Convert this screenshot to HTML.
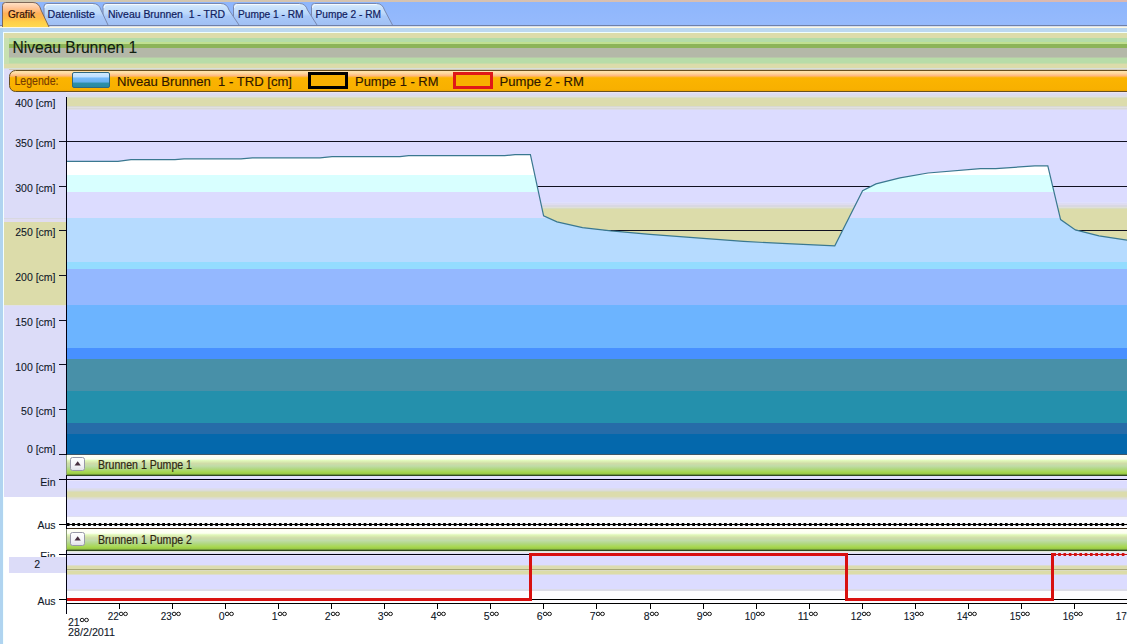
<!DOCTYPE html><html><head><meta charset="utf-8"><style>html,body{margin:0;padding:0;width:1127px;height:644px;overflow:hidden;background:#fff}svg{display:block}text{font-family:"Liberation Sans",sans-serif;white-space:pre}</style></head><body>
<svg width="1127" height="644" viewBox="0 0 1127 644" shape-rendering="crispEdges" xml:space="preserve">
<defs>
<linearGradient id="gAct" x1="0" y1="0" x2="0" y2="1">
<stop offset="0" stop-color="#ffe4c8"/><stop offset="0.2" stop-color="#ffc8a0"/><stop offset="0.45" stop-color="#ffb058"/><stop offset="0.65" stop-color="#ffbc48"/><stop offset="0.8" stop-color="#ffd048"/><stop offset="1" stop-color="#ffd850"/></linearGradient>
<linearGradient id="gTab" x1="0" y1="0" x2="0" y2="1">
<stop offset="0" stop-color="#e0f0fc"/><stop offset="0.15" stop-color="#cce4fc"/><stop offset="0.45" stop-color="#bcd8fa"/><stop offset="0.6" stop-color="#a8c8f8"/><stop offset="1" stop-color="#a0c0f4"/></linearGradient>
<linearGradient id="gLeg" x1="0" y1="0" x2="0" y2="1">
<stop offset="0" stop-color="#ffe4b0"/><stop offset="0.12" stop-color="#ffdca0"/><stop offset="0.25" stop-color="#ffb880"/><stop offset="0.35" stop-color="#fbb400"/><stop offset="0.9" stop-color="#f8b000"/><stop offset="1" stop-color="#e8a000"/></linearGradient>
<linearGradient id="gBlue" x1="0" y1="0" x2="0" y2="1">
<stop offset="0" stop-color="#d0ecff"/><stop offset="0.3" stop-color="#c0e0ff"/><stop offset="0.36" stop-color="#78bcf8"/><stop offset="0.64" stop-color="#68b0f0"/><stop offset="0.7" stop-color="#3090a8"/><stop offset="1" stop-color="#2888a0"/></linearGradient>
<linearGradient id="gHdr" x1="0" y1="0" x2="0" y2="1">
<stop offset="0" stop-color="#fffff8"/><stop offset="0.2" stop-color="#fcfff0"/><stop offset="0.28" stop-color="#e0f8b8"/><stop offset="0.42" stop-color="#d0dca8"/><stop offset="0.55" stop-color="#c0dca8"/><stop offset="0.7" stop-color="#b0d880"/><stop offset="0.85" stop-color="#a8d850"/><stop offset="1" stop-color="#90c040"/></linearGradient>
<linearGradient id="gBtn" x1="0" y1="0" x2="0" y2="1">
<stop offset="0" stop-color="#ffffff"/><stop offset="0.6" stop-color="#f4f4f8"/><stop offset="1" stop-color="#e0e0e8"/></linearGradient>
<pattern id="pDot" x="66" y="0" width="5.3" height="10" patternUnits="userSpaceOnUse"><rect x="0.6" y="0" width="3" height="10" fill="#000"/></pattern>
<pattern id="pDotR" x="1052" y="0" width="5.3" height="10" patternUnits="userSpaceOnUse"><rect x="0.6" y="0" width="3" height="10" fill="#d01010"/></pattern>
</defs>
<linearGradient id="gTop" x1="0" y1="0" x2="1" y2="0"><stop offset="0" stop-color="#d0c8b0"/><stop offset="0.5" stop-color="#d8c0b0"/><stop offset="1" stop-color="#dcb8b0"/></linearGradient>
<linearGradient id="gBar" x1="0" y1="0" x2="0" y2="1"><stop offset="0" stop-color="#8eb6fc"/><stop offset="1" stop-color="#96bafc"/></linearGradient>
<rect x="0" y="0" width="1127" height="2" fill="url(#gTop)" />
<rect x="0" y="2" width="1127" height="23" fill="url(#gBar)" />
<rect x="0" y="25" width="1127" height="1" fill="#7080a8" />
<rect x="0" y="26" width="1127" height="1" fill="#d8e0ec" />
<rect x="0" y="27" width="1127" height="1" fill="#fff8e0" />
<rect x="0" y="28" width="1127" height="4" fill="#bcd8f0" />
<rect x="0" y="32" width="1127" height="1" fill="#f0fffc" />
<rect x="0" y="28" width="3" height="616" fill="#b0d4f0" />
<rect x="3" y="32" width="1" height="612" fill="#f4ffff" />
<path d="M311.5,25 L311.5,6.5 Q311.5,3.5 314.5,3.5 L376.5,3.5 Q382.5,3.5 384.5,10 L392.5,25 Z" fill="url(#gTab)" shape-rendering="geometricPrecision"/>
<path d="M311.5,25 L311.5,6.5 Q311.5,3.5 314.5,3.5 L376.5,3.5 Q382.5,3.5 384.5,10 L392.5,25" fill="none" stroke="#7888b0" stroke-width="1" shape-rendering="geometricPrecision"/>
<path d="M312.5,8 Q312.5,4.5 315.5,4.5 L376.5,4.5" fill="none" stroke="#f4faff" stroke-width="1" shape-rendering="geometricPrecision"/>
<path d="M233.5,25 L233.5,6.5 Q233.5,3.5 236.5,3.5 L299.5,3.5 Q305.5,3.5 307.5,10 L317,25 Z" fill="url(#gTab)" shape-rendering="geometricPrecision"/>
<path d="M233.5,25 L233.5,6.5 Q233.5,3.5 236.5,3.5 L299.5,3.5 Q305.5,3.5 307.5,10 L317,25" fill="none" stroke="#7888b0" stroke-width="1" shape-rendering="geometricPrecision"/>
<path d="M234.5,8 Q234.5,4.5 237.5,4.5 L299.5,4.5" fill="none" stroke="#f4faff" stroke-width="1" shape-rendering="geometricPrecision"/>
<path d="M103,25 L103,6.5 Q103,3.5 106,3.5 L221,3.5 Q227,3.5 229,10 L239,25 Z" fill="url(#gTab)" shape-rendering="geometricPrecision"/>
<path d="M103,25 L103,6.5 Q103,3.5 106,3.5 L221,3.5 Q227,3.5 229,10 L239,25" fill="none" stroke="#7888b0" stroke-width="1" shape-rendering="geometricPrecision"/>
<path d="M104,8 Q104,4.5 107,4.5 L221,4.5" fill="none" stroke="#f4faff" stroke-width="1" shape-rendering="geometricPrecision"/>
<path d="M44,25 L44,6.5 Q44,3.5 47,3.5 L93,3.5 Q99,3.5 101,10 L108,25 Z" fill="url(#gTab)" shape-rendering="geometricPrecision"/>
<path d="M44,25 L44,6.5 Q44,3.5 47,3.5 L93,3.5 Q99,3.5 101,10 L108,25" fill="none" stroke="#7888b0" stroke-width="1" shape-rendering="geometricPrecision"/>
<path d="M45,8 Q45,4.5 48,4.5 L93,4.5" fill="none" stroke="#f4faff" stroke-width="1" shape-rendering="geometricPrecision"/>
<path d="M2.5,27 L2.5,5.5 Q2.5,2.5 5.5,2.5 L33,2.5 Q39,2.5 41,10 L48.5,26 L49.0,27 Z" fill="url(#gAct)" shape-rendering="geometricPrecision"/>
<path d="M2.5,27 L2.5,5.5 Q2.5,2.5 5.5,2.5 L33,2.5 Q39,2.5 41,10 L48.5,26 L49.0,27" fill="none" stroke="#806858" stroke-width="1" shape-rendering="geometricPrecision"/>
<g shape-rendering="geometricPrecision">
<text x="8" y="18" font-size="10.5" fill="#301008" stroke="#301008" stroke-width="0.2" textLength="27" lengthAdjust="spacingAndGlyphs" >Grafik</text>
<text x="47.5" y="18" font-size="10.5" fill="#102060" stroke="#102060" stroke-width="0.2" textLength="47.5" lengthAdjust="spacingAndGlyphs" >Datenliste</text>
<text x="108" y="18" font-size="10.5" fill="#102060" stroke="#102060" stroke-width="0.2" textLength="117" lengthAdjust="spacingAndGlyphs" >Niveau Brunnen  1 - TRD</text>
<text x="238" y="18" font-size="10.5" fill="#102060" stroke="#102060" stroke-width="0.2" textLength="65.5" lengthAdjust="spacingAndGlyphs" >Pumpe 1 - RM</text>
<text x="315.5" y="18" font-size="10.5" fill="#102060" stroke="#102060" stroke-width="0.2" textLength="65.5" lengthAdjust="spacingAndGlyphs" >Pumpe 2 - RM</text>
</g>
<rect x="4" y="33" width="1123" height="611" fill="#ffffff" />
<rect x="4" y="33" width="1123" height="35" fill="#dcdcaa" />
<rect x="4" y="38" width="1123" height="4" fill="#b4dca8" />
<rect x="4" y="42" width="1123" height="2" fill="#c0e090" />
<rect x="9" y="44" width="1118" height="4" fill="#8cb458" />
<rect x="9" y="48" width="1118" height="9" fill="#b4b8a8" />
<rect x="9" y="57" width="1118" height="1" fill="#b8c8a8" />
<rect x="4" y="58" width="1123" height="5" fill="#b8dca8" />
<rect x="4" y="63" width="1123" height="1" fill="#c8dca8" />
<rect x="4" y="64" width="1123" height="4" fill="#dcdcaa" />
<rect x="4" y="38" width="5" height="26" fill="#c8e0b0" />
<rect x="4" y="68" width="1123" height="1" fill="#d8e0d8" />
<rect x="4" y="69" width="1123" height="428" fill="#dcdcf8" />
<rect x="9" y="69" width="1118" height="1" fill="#d0c8b8" />
<g shape-rendering="geometricPrecision">
<text x="12.5" y="52.8" font-size="16" fill="#102010" stroke="#102010" stroke-width="0.1" textLength="124.8" lengthAdjust="spacingAndGlyphs" >Niveau Brunnen 1</text>
</g>
<rect x="9.5" y="70.5" width="1130" height="21" rx="6" ry="6" fill="url(#gLeg)" stroke="#685020" stroke-width="1" shape-rendering="geometricPrecision"/>
<rect x="72.5" y="72.5" width="37" height="15" rx="1.5" fill="url(#gBlue)" stroke="#306880" stroke-width="1" shape-rendering="geometricPrecision"/>
<rect x="309.5" y="73.5" width="37" height="14" fill="#f8b000" stroke="#000" stroke-width="3"/>
<rect x="454.5" y="73.5" width="37" height="14" fill="#f8b000" stroke="#e01818" stroke-width="3"/>
<g shape-rendering="geometricPrecision">
<text x="14.5" y="85" font-size="12" fill="#783c00" stroke="#783c00" stroke-width="0.15" textLength="44" lengthAdjust="spacingAndGlyphs" >Legende:</text>
<text x="117" y="85.5" font-size="13" fill="#301800" stroke="#301800" stroke-width="0.15" textLength="175" lengthAdjust="spacingAndGlyphs" >Niveau Brunnen  1 - TRD [cm]</text>
<text x="355" y="85.5" font-size="13" fill="#301800" stroke="#301800" stroke-width="0.15" textLength="83.5" lengthAdjust="spacingAndGlyphs" >Pumpe 1 - RM</text>
<text x="499.5" y="85.5" font-size="13" fill="#301800" stroke="#301800" stroke-width="0.15" textLength="84.5" lengthAdjust="spacingAndGlyphs" >Pumpe 2 - RM</text>
</g>
<rect x="4" y="92" width="62" height="405" fill="#dcdcf8" />
<rect x="4" y="218" width="62" height="1" fill="#d8d8e0" />
<rect x="4" y="219" width="62" height="3" fill="#e0dcf0" />
<rect x="4" y="222" width="62" height="83" fill="#dcdcaa" />
<rect x="4" y="305" width="62" height="1" fill="#e0e0e8" />
<rect x="66" y="92" width="1061" height="362" fill="#dcdcff" />
<rect x="66" y="92" width="1061" height="1" fill="#f0e4ec" />
<rect x="66" y="93" width="1061" height="1" fill="#dcdcf4" />
<rect x="66" y="94" width="1061" height="1" fill="#dcdcf0" />
<rect x="66" y="95" width="1061" height="1" fill="#dcdce8" />
<rect x="66" y="96" width="1061" height="1" fill="#e0e0e0" />
<rect x="66" y="97" width="1061" height="1" fill="#d8dcc8" />
<rect x="66" y="106" width="1061" height="1" fill="#d8d8d0" />
<rect x="66" y="107" width="1061" height="1" fill="#e0e0e0" />
<rect x="66" y="108" width="1061" height="1" fill="#d8d8d8" />
<rect x="66" y="109" width="1061" height="1" fill="#dcdce8" />
<rect x="66" y="202" width="1061" height="1" fill="#e0e0fc" />
<rect x="66" y="203" width="1061" height="1" fill="#dcdcf4" />
<rect x="66" y="204" width="1061" height="1" fill="#e0dcf0" />
<rect x="66" y="205" width="1061" height="1" fill="#d8d8e4" />
<rect x="66" y="206" width="1061" height="1" fill="#d8d8e0" />
<rect x="66" y="207" width="1061" height="1" fill="#e0e0d8" />
<rect x="66" y="208" width="1061" height="1" fill="#d8dcc0" />
<rect x="66" y="98" width="1061" height="8" fill="#dcdcac" />
<rect x="66" y="209" width="1061" height="53" fill="#dcdcaa" />
<rect x="66" y="141" width="1061" height="1" fill="#101020" />
<rect x="66" y="186" width="1061" height="1" fill="#101020" />
<rect x="66" y="230" width="1061" height="1" fill="#101020" />
<rect x="66" y="275" width="1061" height="1" fill="#101020" />
<rect x="66" y="320" width="1061" height="1" fill="#101020" />
<rect x="66" y="364" width="1061" height="1" fill="#101020" />
<rect x="66" y="409" width="1061" height="1" fill="#101020" />
<rect x="66" y="454" width="1061" height="1" fill="#101020" />
<clipPath id="cArea"><path d="M66,454 L66,161.4 L118,161.4 L131,159.70000000000002 L175,159.70000000000002 L184,158.8 L241,158.8 L252.4,157.8 L320,157.8 L332,156.6 L400,156.6 L408.6,155.70000000000002 L504.7,155.70000000000002 L515,154.70000000000002 L530.4,154.70000000000002 L543.6,215.8 L557,221.9 L582.5,227.6 L611,230.9 L650,234.4 L700,238.20000000000002 L743.5,241.4 L787,243.70000000000002 L834.8,245.8 L862.6,190.8 L876,183.9 L900,177.8 L928,173.0 L980.4,168.70000000000002 L995.7,168.70000000000002 L1034.8,165.8 L1047.8,165.8 L1060.6,219.6 L1075.4,229.9 L1099,235.8 L1127,240.20000000000002 L1127,454 Z"/></clipPath>
<g clip-path="url(#cArea)">
<rect x="66" y="97" width="1061" height="78" fill="#ffffff" />
<rect x="66" y="175" width="1061" height="17" fill="#d8ffff" />
<rect x="66" y="192" width="1061" height="26" fill="#dcdcff" />
<rect x="66" y="218" width="1061" height="44" fill="#b6dbff" />
<rect x="66" y="262" width="1061" height="7" fill="#94dcff" />
<rect x="66" y="269" width="1061" height="36" fill="#94b8ff" />
<rect x="66" y="305" width="1061" height="43" fill="#6cb4ff" />
<rect x="66" y="348" width="1061" height="11" fill="#4890ff" />
<rect x="66" y="359" width="1061" height="32" fill="#4890a8" />
<rect x="66" y="391" width="1061" height="32" fill="#2490ac" />
<rect x="66" y="423" width="1061" height="11" fill="#266ca8" />
<rect x="66" y="434" width="1061" height="20" fill="#0468ac" />
</g>
<polyline points="66,161.4 118,161.4 131,159.70000000000002 175,159.70000000000002 184,158.8 241,158.8 252.4,157.8 320,157.8 332,156.6 400,156.6 408.6,155.70000000000002 504.7,155.70000000000002 515,154.70000000000002 530.4,154.70000000000002 543.6,215.8 557,221.9 582.5,227.6 611,230.9 650,234.4 700,238.20000000000002 743.5,241.4 787,243.70000000000002 834.8,245.8 862.6,190.8 876,183.9 900,177.8 928,173.0 980.4,168.70000000000002 995.7,168.70000000000002 1034.8,165.8 1047.8,165.8 1060.6,219.6 1075.4,229.9 1099,235.8 1127,240.20000000000002" fill="none" stroke="#3a7890" stroke-width="1.2" shape-rendering="geometricPrecision"/>
<rect x="66" y="454" width="1061" height="1" fill="#405868" />
<rect x="59" y="141" width="7" height="1" fill="#101020" />
<rect x="59" y="186" width="7" height="1" fill="#101020" />
<rect x="59" y="230" width="7" height="1" fill="#101020" />
<rect x="59" y="275" width="7" height="1" fill="#101020" />
<rect x="59" y="320" width="7" height="1" fill="#101020" />
<rect x="59" y="364" width="7" height="1" fill="#101020" />
<rect x="59" y="409" width="7" height="1" fill="#101020" />
<rect x="59" y="454" width="7" height="1" fill="#101020" />
<g shape-rendering="geometricPrecision">
<text x="55.5" y="106.5" font-size="10.5" fill="#101828" stroke="#101828" stroke-width="0.1" text-anchor="end" >400 [cm]</text>
<text x="55.5" y="146.7" font-size="10.5" fill="#101828" stroke="#101828" stroke-width="0.1" text-anchor="end" >350 [cm]</text>
<text x="55.5" y="191.5" font-size="10.5" fill="#101828" stroke="#101828" stroke-width="0.1" text-anchor="end" >300 [cm]</text>
<text x="55.5" y="236" font-size="10.5" fill="#101828" stroke="#101828" stroke-width="0.1" text-anchor="end" >250 [cm]</text>
<text x="55.5" y="280.5" font-size="10.5" fill="#101828" stroke="#101828" stroke-width="0.1" text-anchor="end" >200 [cm]</text>
<text x="55.5" y="326" font-size="10.5" fill="#101828" stroke="#101828" stroke-width="0.1" text-anchor="end" >150 [cm]</text>
<text x="55.5" y="370.5" font-size="10.5" fill="#101828" stroke="#101828" stroke-width="0.1" text-anchor="end" >100 [cm]</text>
<text x="55.5" y="415" font-size="10.5" fill="#101828" stroke="#101828" stroke-width="0.1" text-anchor="end" >50 [cm]</text>
<text x="55.5" y="452.6" font-size="10.5" fill="#101828" stroke="#101828" stroke-width="0.1" text-anchor="end" >0 [cm]</text>
</g>
<rect x="66" y="455" width="1061" height="20" fill="url(#gHdr)" />
<rect x="66" y="474" width="1061" height="1" fill="#709838" />
<rect x="66" y="475" width="1061" height="1" fill="#304820" />
<rect x="66" y="476" width="1061" height="41" fill="#dcdcff" />
<rect x="66" y="476" width="1061" height="2" fill="#e4e2fc" />
<rect x="66" y="488" width="1061" height="1" fill="#dcdcf0" />
<rect x="66" y="489" width="1061" height="1" fill="#dcdce8" />
<rect x="66" y="490" width="1061" height="1" fill="#dcdcd8" />
<rect x="66" y="491" width="1061" height="1" fill="#d8dcc0" />
<rect x="66" y="496" width="1061" height="1" fill="#dcdcb0" />
<rect x="66" y="497" width="1061" height="1" fill="#dcdcc8" />
<rect x="66" y="498" width="1061" height="1" fill="#dcdcd8" />
<rect x="66" y="499" width="1061" height="1" fill="#dcdce8" />
<rect x="66" y="492" width="1061" height="4" fill="#dcdcac" />
<rect x="66" y="480" width="1061" height="1" fill="#e8e4fc" />
<rect x="66" y="516" width="1061" height="1" fill="#e0e0f0" />
<rect x="4" y="497" width="62" height="106" fill="#ffffff" />
<rect x="66" y="517" width="1061" height="11" fill="#fcfcff" />
<rect x="59" y="479" width="1068" height="1" fill="#000010" />
<rect x="59" y="524" width="1068" height="1" fill="#000" />
<rect x="66" y="523" width="1061" height="3" fill="url(#pDot)" />
<rect x="66" y="528" width="1061" height="1" fill="#382818" />
<rect x="70.5" y="457.5" width="14" height="13" rx="2" ry="2" fill="url(#gBtn)" stroke="#9898a8" stroke-width="1" shape-rendering="geometricPrecision"/>
<path d="M74.5,465.5 L80.8,465.5 L77.7,461.2 Z" fill="#483040" shape-rendering="geometricPrecision"/>
<g shape-rendering="geometricPrecision">
<text x="98" y="469" font-size="12" fill="#302810" stroke="#302810" stroke-width="0.2" textLength="94" lengthAdjust="spacingAndGlyphs" >Brunnen 1 Pumpe 1</text>
<text x="55.5" y="486" font-size="10.5" fill="#101828" stroke="#101828" stroke-width="0.1" text-anchor="end" >Ein</text>
<text x="55.5" y="529" font-size="10.5" fill="#101828" stroke="#101828" stroke-width="0.1" text-anchor="end" >Aus</text>
</g>
<rect x="66" y="529" width="1061" height="21" fill="url(#gHdr)" />
<rect x="66" y="549" width="1061" height="1" fill="#709838" />
<rect x="66" y="550" width="1061" height="1" fill="#304820" />
<rect x="66" y="551" width="1061" height="40" fill="#dcdcff" />
<rect x="66" y="551" width="1061" height="1" fill="#e0e8d8" />
<rect x="66" y="552" width="1061" height="1" fill="#e8e8f0" />
<rect x="66" y="553" width="1061" height="1" fill="#e0e0f8" />
<rect x="66" y="555" width="1061" height="1" fill="#e8e8fc" />
<rect x="66" y="565" width="1061" height="1" fill="#dcdcd0" />
<rect x="66" y="566" width="1061" height="1" fill="#dcdcb0" />
<rect x="66" y="567" width="1061" height="1" fill="#dcdcb0" />
<rect x="66" y="568" width="1061" height="1" fill="#dcdcb0" />
<rect x="66" y="569" width="1061" height="1" fill="#a8a878" />
<rect x="66" y="570" width="1061" height="1" fill="#dcdcc0" />
<rect x="66" y="571" width="1061" height="1" fill="#dcdca8" />
<rect x="66" y="572" width="1061" height="1" fill="#dcdca8" />
<rect x="66" y="573" width="1061" height="1" fill="#dcdca8" />
<rect x="66" y="574" width="1061" height="1" fill="#dcdcd0" />
<rect x="66" y="589" width="1061" height="1" fill="#dcdce8" />
<rect x="66" y="590" width="1061" height="1" fill="#dcdce8" />
<rect x="66" y="591" width="1061" height="12" fill="#fcfcff" />
<rect x="59" y="554" width="1068" height="1" fill="#000010" />
<rect x="59" y="599" width="1068" height="1" fill="#000" />
<rect x="70.5" y="532.5" width="14" height="13" rx="2" ry="2" fill="url(#gBtn)" stroke="#9898a8" stroke-width="1" shape-rendering="geometricPrecision"/>
<path d="M74.5,540.5 L80.8,540.5 L77.7,536.2 Z" fill="#483040" shape-rendering="geometricPrecision"/>
<g shape-rendering="geometricPrecision">
<text x="98" y="544" font-size="12" fill="#302810" stroke="#302810" stroke-width="0.2" textLength="94" lengthAdjust="spacingAndGlyphs" >Brunnen 1 Pumpe 2</text>
<text x="55.5" y="560" font-size="10.5" fill="#101828" stroke="#101828" stroke-width="0.1" text-anchor="end" >Ein</text>
</g>
<rect x="9" y="557" width="57" height="16" fill="#dcdcf8" />
<g shape-rendering="geometricPrecision">
<text x="40" y="567.6" font-size="10.5" fill="#101828" stroke="#101828" stroke-width="0.1" text-anchor="end" >2</text>
<text x="55.5" y="604.5" font-size="10.5" fill="#101828" stroke="#101828" stroke-width="0.1" text-anchor="end" >Aus</text>
</g>
<path d="M66,599.5 L530.5,599.5 L530.5,554.5 L846.5,554.5 L846.5,599.5 L1052,599.5 L1052,554.5 L1056,554.5" fill="none" stroke="#d81010" stroke-width="3" stroke-linejoin="miter"/>
<rect x="1056" y="553" width="71" height="3" fill="url(#pDotR)" />
<rect x="1056" y="554" width="71" height="1" fill="#d01010" />
<rect x="66" y="97" width="1" height="358" fill="#000010" />
<rect x="66" y="455" width="1" height="20" fill="#8a9a78" />
<rect x="66" y="475" width="1" height="54" fill="#000010" />
<rect x="66" y="529" width="1" height="21" fill="#8a9a78" />
<rect x="66" y="550" width="1" height="64" fill="#000010" />
<rect x="66" y="603" width="1061" height="1" fill="#000" />
<g shape-rendering="geometricPrecision">
<text x="68" y="625.5" font-size="10.5" fill="#101828" stroke="#101828" stroke-width="0.1" >21</text>
<ellipse cx="82.1" cy="620" rx="1.9" ry="1.7" fill="none" stroke="#181818" stroke-width="1.0"/>
<ellipse cx="86.5" cy="620" rx="1.9" ry="1.7" fill="none" stroke="#181818" stroke-width="1.0"/>
<text x="68" y="636" font-size="10.5" fill="#101828" stroke="#101828" stroke-width="0.1" textLength="47" lengthAdjust="spacingAndGlyphs" >28/2/2011</text>
<rect x="119" y="604" width="1" height="5" fill="#000" />
<text x="118.7" y="619.5" font-size="10.5" fill="#101828" stroke="#101828" stroke-width="0.1" textLength="11" lengthAdjust="spacingAndGlyphs" text-anchor="end" >22</text>
<ellipse cx="121.1" cy="613.9" rx="1.9" ry="1.7" fill="none" stroke="#181818" stroke-width="1.0"/>
<ellipse cx="125.5" cy="613.9" rx="1.9" ry="1.7" fill="none" stroke="#181818" stroke-width="1.0"/>
<rect x="172" y="604" width="1" height="5" fill="#000" />
<text x="171.7" y="619.5" font-size="10.5" fill="#101828" stroke="#101828" stroke-width="0.1" textLength="11" lengthAdjust="spacingAndGlyphs" text-anchor="end" >23</text>
<ellipse cx="174.10000000000002" cy="613.9" rx="1.9" ry="1.7" fill="none" stroke="#181818" stroke-width="1.0"/>
<ellipse cx="178.5" cy="613.9" rx="1.9" ry="1.7" fill="none" stroke="#181818" stroke-width="1.0"/>
<rect x="225" y="604" width="1" height="5" fill="#000" />
<text x="224.7" y="619.5" font-size="10.5" fill="#101828" stroke="#101828" stroke-width="0.1" text-anchor="end" >0</text>
<ellipse cx="227.10000000000002" cy="613.9" rx="1.9" ry="1.7" fill="none" stroke="#181818" stroke-width="1.0"/>
<ellipse cx="231.5" cy="613.9" rx="1.9" ry="1.7" fill="none" stroke="#181818" stroke-width="1.0"/>
<rect x="278" y="604" width="1" height="5" fill="#000" />
<text x="277.7" y="619.5" font-size="10.5" fill="#101828" stroke="#101828" stroke-width="0.1" text-anchor="end" >1</text>
<ellipse cx="280.1" cy="613.9" rx="1.9" ry="1.7" fill="none" stroke="#181818" stroke-width="1.0"/>
<ellipse cx="284.5" cy="613.9" rx="1.9" ry="1.7" fill="none" stroke="#181818" stroke-width="1.0"/>
<rect x="331" y="604" width="1" height="5" fill="#000" />
<text x="330.7" y="619.5" font-size="10.5" fill="#101828" stroke="#101828" stroke-width="0.1" text-anchor="end" >2</text>
<ellipse cx="333.1" cy="613.9" rx="1.9" ry="1.7" fill="none" stroke="#181818" stroke-width="1.0"/>
<ellipse cx="337.5" cy="613.9" rx="1.9" ry="1.7" fill="none" stroke="#181818" stroke-width="1.0"/>
<rect x="384" y="604" width="1" height="5" fill="#000" />
<text x="383.7" y="619.5" font-size="10.5" fill="#101828" stroke="#101828" stroke-width="0.1" text-anchor="end" >3</text>
<ellipse cx="386.1" cy="613.9" rx="1.9" ry="1.7" fill="none" stroke="#181818" stroke-width="1.0"/>
<ellipse cx="390.5" cy="613.9" rx="1.9" ry="1.7" fill="none" stroke="#181818" stroke-width="1.0"/>
<rect x="437" y="604" width="1" height="5" fill="#000" />
<text x="436.7" y="619.5" font-size="10.5" fill="#101828" stroke="#101828" stroke-width="0.1" text-anchor="end" >4</text>
<ellipse cx="439.1" cy="613.9" rx="1.9" ry="1.7" fill="none" stroke="#181818" stroke-width="1.0"/>
<ellipse cx="443.5" cy="613.9" rx="1.9" ry="1.7" fill="none" stroke="#181818" stroke-width="1.0"/>
<rect x="490" y="604" width="1" height="5" fill="#000" />
<text x="489.7" y="619.5" font-size="10.5" fill="#101828" stroke="#101828" stroke-width="0.1" text-anchor="end" >5</text>
<ellipse cx="492.1" cy="613.9" rx="1.9" ry="1.7" fill="none" stroke="#181818" stroke-width="1.0"/>
<ellipse cx="496.5" cy="613.9" rx="1.9" ry="1.7" fill="none" stroke="#181818" stroke-width="1.0"/>
<rect x="543" y="604" width="1" height="5" fill="#000" />
<text x="542.7" y="619.5" font-size="10.5" fill="#101828" stroke="#101828" stroke-width="0.1" text-anchor="end" >6</text>
<ellipse cx="545.0999999999999" cy="613.9" rx="1.9" ry="1.7" fill="none" stroke="#181818" stroke-width="1.0"/>
<ellipse cx="549.5" cy="613.9" rx="1.9" ry="1.7" fill="none" stroke="#181818" stroke-width="1.0"/>
<rect x="596" y="604" width="1" height="5" fill="#000" />
<text x="595.7" y="619.5" font-size="10.5" fill="#101828" stroke="#101828" stroke-width="0.1" text-anchor="end" >7</text>
<ellipse cx="598.0999999999999" cy="613.9" rx="1.9" ry="1.7" fill="none" stroke="#181818" stroke-width="1.0"/>
<ellipse cx="602.5" cy="613.9" rx="1.9" ry="1.7" fill="none" stroke="#181818" stroke-width="1.0"/>
<rect x="650" y="604" width="1" height="5" fill="#000" />
<text x="649.7" y="619.5" font-size="10.5" fill="#101828" stroke="#101828" stroke-width="0.1" text-anchor="end" >8</text>
<ellipse cx="652.0999999999999" cy="613.9" rx="1.9" ry="1.7" fill="none" stroke="#181818" stroke-width="1.0"/>
<ellipse cx="656.5" cy="613.9" rx="1.9" ry="1.7" fill="none" stroke="#181818" stroke-width="1.0"/>
<rect x="703" y="604" width="1" height="5" fill="#000" />
<text x="702.7" y="619.5" font-size="10.5" fill="#101828" stroke="#101828" stroke-width="0.1" text-anchor="end" >9</text>
<ellipse cx="705.0999999999999" cy="613.9" rx="1.9" ry="1.7" fill="none" stroke="#181818" stroke-width="1.0"/>
<ellipse cx="709.5" cy="613.9" rx="1.9" ry="1.7" fill="none" stroke="#181818" stroke-width="1.0"/>
<rect x="756" y="604" width="1" height="5" fill="#000" />
<text x="755.7" y="619.5" font-size="10.5" fill="#101828" stroke="#101828" stroke-width="0.1" textLength="11" lengthAdjust="spacingAndGlyphs" text-anchor="end" >10</text>
<ellipse cx="758.0999999999999" cy="613.9" rx="1.9" ry="1.7" fill="none" stroke="#181818" stroke-width="1.0"/>
<ellipse cx="762.5" cy="613.9" rx="1.9" ry="1.7" fill="none" stroke="#181818" stroke-width="1.0"/>
<rect x="809" y="604" width="1" height="5" fill="#000" />
<text x="808.7" y="619.5" font-size="10.5" fill="#101828" stroke="#101828" stroke-width="0.1" textLength="11" lengthAdjust="spacingAndGlyphs" text-anchor="end" >11</text>
<ellipse cx="811.0999999999999" cy="613.9" rx="1.9" ry="1.7" fill="none" stroke="#181818" stroke-width="1.0"/>
<ellipse cx="815.5" cy="613.9" rx="1.9" ry="1.7" fill="none" stroke="#181818" stroke-width="1.0"/>
<rect x="862" y="604" width="1" height="5" fill="#000" />
<text x="861.7" y="619.5" font-size="10.5" fill="#101828" stroke="#101828" stroke-width="0.1" textLength="11" lengthAdjust="spacingAndGlyphs" text-anchor="end" >12</text>
<ellipse cx="864.0999999999999" cy="613.9" rx="1.9" ry="1.7" fill="none" stroke="#181818" stroke-width="1.0"/>
<ellipse cx="868.5" cy="613.9" rx="1.9" ry="1.7" fill="none" stroke="#181818" stroke-width="1.0"/>
<rect x="915" y="604" width="1" height="5" fill="#000" />
<text x="914.7" y="619.5" font-size="10.5" fill="#101828" stroke="#101828" stroke-width="0.1" textLength="11" lengthAdjust="spacingAndGlyphs" text-anchor="end" >13</text>
<ellipse cx="917.0999999999999" cy="613.9" rx="1.9" ry="1.7" fill="none" stroke="#181818" stroke-width="1.0"/>
<ellipse cx="921.5" cy="613.9" rx="1.9" ry="1.7" fill="none" stroke="#181818" stroke-width="1.0"/>
<rect x="968" y="604" width="1" height="5" fill="#000" />
<text x="967.7" y="619.5" font-size="10.5" fill="#101828" stroke="#101828" stroke-width="0.1" textLength="11" lengthAdjust="spacingAndGlyphs" text-anchor="end" >14</text>
<ellipse cx="970.0999999999999" cy="613.9" rx="1.9" ry="1.7" fill="none" stroke="#181818" stroke-width="1.0"/>
<ellipse cx="974.5" cy="613.9" rx="1.9" ry="1.7" fill="none" stroke="#181818" stroke-width="1.0"/>
<rect x="1021" y="604" width="1" height="5" fill="#000" />
<text x="1020.7" y="619.5" font-size="10.5" fill="#101828" stroke="#101828" stroke-width="0.1" textLength="11" lengthAdjust="spacingAndGlyphs" text-anchor="end" >15</text>
<ellipse cx="1023.0999999999999" cy="613.9" rx="1.9" ry="1.7" fill="none" stroke="#181818" stroke-width="1.0"/>
<ellipse cx="1027.5" cy="613.9" rx="1.9" ry="1.7" fill="none" stroke="#181818" stroke-width="1.0"/>
<rect x="1074" y="604" width="1" height="5" fill="#000" />
<text x="1073.7" y="619.5" font-size="10.5" fill="#101828" stroke="#101828" stroke-width="0.1" textLength="11" lengthAdjust="spacingAndGlyphs" text-anchor="end" >16</text>
<ellipse cx="1076.1" cy="613.9" rx="1.9" ry="1.7" fill="none" stroke="#181818" stroke-width="1.0"/>
<ellipse cx="1080.5" cy="613.9" rx="1.9" ry="1.7" fill="none" stroke="#181818" stroke-width="1.0"/>
<text x="1126.7" y="619.5" font-size="10.5" fill="#101828" stroke="#101828" stroke-width="0.1" textLength="11" lengthAdjust="spacingAndGlyphs" text-anchor="end" >17</text>
<ellipse cx="1129.1" cy="613.9" rx="1.9" ry="1.7" fill="none" stroke="#181818" stroke-width="1.0"/>
<ellipse cx="1133.5" cy="613.9" rx="1.9" ry="1.7" fill="none" stroke="#181818" stroke-width="1.0"/>
</g>
</svg></body></html>
